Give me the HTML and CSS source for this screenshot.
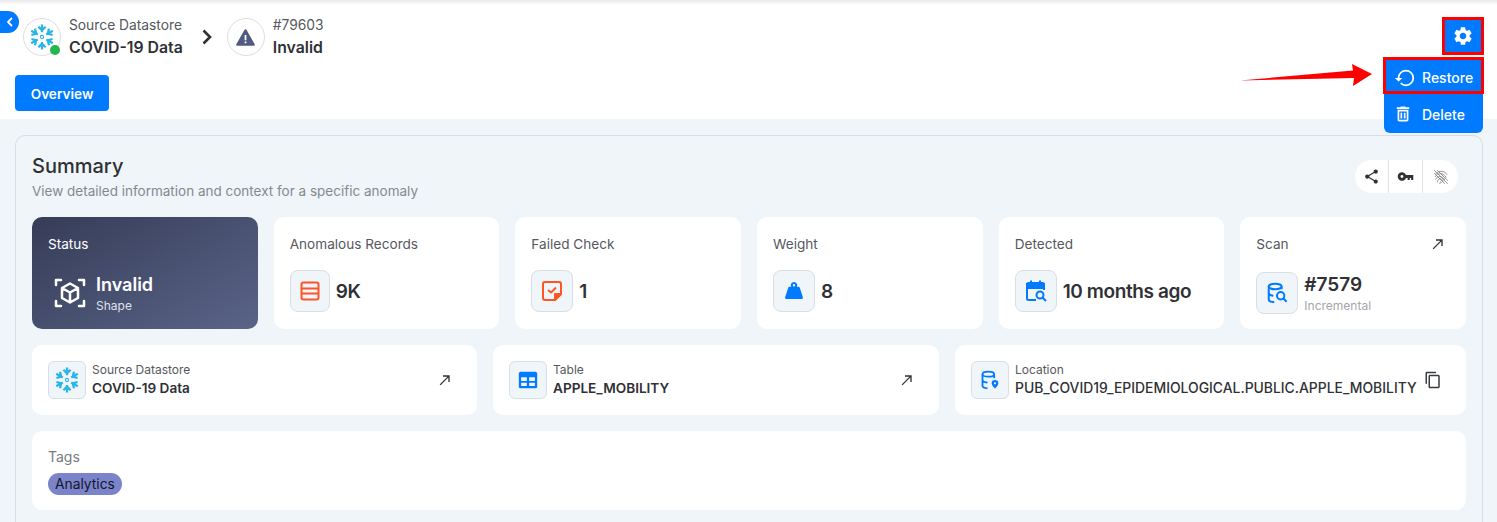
FILE: index.html
```html
<!DOCTYPE html>
<html lang="en">
<head>
  <meta charset="UTF-8" />
  <title>Anomaly #79603</title>
  <link rel="stylesheet" href="styles.css">
</head>
<body>

  <svg class="sprite" aria-hidden="true">
    <symbol id="snowflake" viewBox="0 0 24 24">
      <g fill="none" stroke="currentColor" stroke-width="2.100">
        <path id="flake-arm" d="M12 .5v7M8.700 2.600l3.300 3.300 3.300-3.300" />
        <use href="#flake-arm" transform="rotate(60 12 12)" />
        <use href="#flake-arm" transform="rotate(120 12 12)" />
        <use href="#flake-arm" transform="rotate(180 12 12)" />
        <use href="#flake-arm" transform="rotate(240 12 12)" />
        <use href="#flake-arm" transform="rotate(300 12 12)" />
      </g>
      <circle cx="12" cy="12" r="1.500" fill="none" stroke="currentColor" stroke-width="1" />
    </symbol>
    <symbol id="ne-arrow" viewBox="0 0 24 24">
      <path fill="currentColor" d="M9 5v2h6.590L4 18.590 5.410 20 17 8.410V15h2V5z" />
    </symbol>
  </svg>

  <header class="topbar">
    <button class="back-btn" type="button">
      <svg viewBox="0 0 12 12" width="12" height="12"><path d="M7.500 2.500 4 6l3.500 3.500" fill="none" stroke="#fff" stroke-width="1.800" stroke-linecap="round" stroke-linejoin="round" /></svg>
    </button>

    <div class="crumbs">
      <div class="crumb-icon">
        <svg class="flake-lg"><use href="#snowflake" /></svg>
        <span class="online-dot"></span>
      </div>
      <div class="crumb-text">
        <span class="crumb-label">Source Datastore</span>
        <strong class="crumb-value">COVID-19 Data</strong>
      </div>
      <svg class="crumb-chevron" viewBox="0 0 12 18" width="12" height="18"><path d="M2.500 2.500 9 9l-6.500 6.500" fill="none" stroke="#2f3136" stroke-width="2.600" /></svg>
      <div class="crumb-icon">
        <svg viewBox="0 0 24 24" width="21" height="21"><path fill="#515a80" d="M12 2.500c.5 0 .9.300 1.100.700l9.400 16.500c.4.700-.1 1.800-1.100 1.800H2.600c-1 0-1.500-1.100-1.100-1.800l9.400-16.500c.2-.4.600-.7 1.100-.7zm-1 6.500v6h2V9h-2zm0 7.500v2h2v-2h-2z" /></svg>
      </div>
      <div class="crumb-text">
        <span class="crumb-label">#79603</span>
        <strong class="crumb-value">Invalid</strong>
      </div>
    </div>

    <button class="tab-btn" type="button">Overview</button>

    <button class="gear-btn" type="button">
      <svg viewBox="0 0 24 24" width="22" height="22"><path fill="#fff" d="M19.140 12.940c.04-.3.06-.61.06-.94 0-.32-.02-.64-.07-.94l2.030-1.580a.49.49 0 0 0 .12-.61l-1.920-3.320a.488.488 0 0 0-.59-.22l-2.390.96c-.5-.38-1.030-.7-1.620-.94l-.36-2.540a.484.484 0 0 0-.48-.41h-3.840c-.24 0-.43.17-.47.41l-.36 2.540c-.59.24-1.130.57-1.620.94l-2.390-.96c-.22-.08-.47 0-.59.22L2.740 8.870c-.12.21-.08.47.12.61l2.030 1.580c-.05.3-.09.63-.09.94s.02.64.07.94l-2.030 1.580a.49.49 0 0 0-.12.61l1.920 3.320c.12.22.37.29.59.22l2.390-.96c.5.38 1.030.7 1.620.94l.36 2.540c.05.24.24.41.48.41h3.840c.24 0 .44-.17.47-.41l.36-2.540c.59-.24 1.130-.56 1.620-.94l2.390.96c.22.08.47 0 .59-.22l1.920-3.320c.12-.22.07-.47-.12-.61l-2.010-1.580zM12 15.600c-1.980 0-3.600-1.620-3.600-3.600s1.620-3.600 3.600-3.600 3.600 1.620 3.600 3.600-1.620 3.600-3.600 3.600z" /></svg>
    </button>

    <div class="menu">
      <div class="menu-item menu-item-marked">
        <svg viewBox="0 0 24 24" width="22" height="22"><path fill="#fff" d="M13 3a9 9 0 0 0-9 9H1l3.890 3.890.07.14L9 12H6c0-3.870 3.130-7 7-7s7 3.130 7 7-3.130 7-7 7c-1.930 0-3.680-.79-4.940-2.060l-1.420 1.420A8.954 8.954 0 0 0 13 21a9 9 0 0 0 0-18z" /></svg>
        Restore
      </div>
      <div class="menu-item">
        <svg viewBox="0 0 24 24" width="20" height="20"><path fill="#fff" d="M9.500 3l-1 1H4.500v2h15V4h-4l-1-1h-5zM5.500 7v12c0 1.100.9 2 2 2h9c1.100 0 2-.9 2-2V7h-13zm2 2h9v10h-9V9zm1.500 1.500v7h2v-7H9zm4 0v7h2v-7h-2z" /></svg>
        Delete
      </div>
    </div>

    <svg class="red-arrow" viewBox="0 0 134 24" width="134" height="24"><polygon fill="#fe0000" points="0,16.500 113,6.500 112,0 132,10 113,22 114,14" /></svg>
  </header>

  <main class="content">
    <section class="panel">
      <div class="panel-head">
        <div>
          <h2>Summary</h2>
          <p>View detailed information and context for a specific anomaly</p>
        </div>
        <div class="action-pill">
          <span class="action">
            <svg viewBox="0 0 24 24" width="17" height="17"><path fill="#2f3136" d="M18 16.080c-.76 0-1.440.3-1.960.77L8.910 12.700c.05-.23.09-.46.09-.7s-.04-.47-.09-.7l7.050-4.110c.54.5 1.250.81 2.040.81 1.660 0 3-1.340 3-3s-1.340-3-3-3-3 1.340-3 3c0 .24.04.47.09.7L8.040 9.810C7.500 9.310 6.790 9 6 9c-1.660 0-3 1.340-3 3s1.340 3 3 3c.79 0 1.500-.31 2.040-.81l7.120 4.160c-.05.21-.08.43-.08.65 0 1.610 1.310 2.920 2.920 2.920 1.610 0 2.920-1.310 2.920-2.920s-1.310-2.920-2.920-2.920z" /></svg>
          </span>
          <span class="action">
            <svg viewBox="0 0 24 24" width="17" height="17"><path fill="#2f3136" d="M12.650 10C11.830 7.670 9.610 6 7 6c-3.310 0-6 2.690-6 6s2.690 6 6 6c2.610 0 4.830-1.670 5.650-4H15v3h3v-3h2v3h3v-7H12.650zM7 14c-1.100 0-2-.9-2-2s.9-2 2-2 2 .9 2 2-.9 2-2 2z" /></svg>
          </span>
          <span class="action">
            <svg viewBox="0 0 24 24" width="18" height="18" fill="none" stroke="#808080" stroke-width="1.100"><path d="M5 8c2-4 11-6 15 1M4 12c3-6 12-6 15 1M4.500 15.500C7 10 14 10 17 16M7 19c1-6 6-6 8-1M10.500 21.500c0-3 1-4 2.500-2M3 3l18 18M3 7l14 14M7 3l14 14" /></svg>
          </span>
        </div>
      </div>

      <div class="stats">
        <div class="stat stat-status">
          <span class="stat-label">Status</span>
          <div class="status-body">
            <svg viewBox="0 0 32 32" width="32" height="32" fill="none" stroke="#fff" stroke-width="2.500" stroke-linejoin="round" stroke-linecap="round"><path d="M2 8V3h5M25 3h5v5M30 24v5h-5M7 29H2v-5" /><path d="M16 6.500l8 4.500v10l-8 4.500L8 21V11l8-4.500zM8 11l8 4.500 8-4.500M16 15.500v10" /></svg>
            <div class="status-text">
              <strong>Invalid</strong>
              <span>Shape</span>
            </div>
          </div>
        </div>

        <div class="stat">
          <span class="stat-label">Anomalous Records</span>
          <div class="stat-body">
            <span class="icon-box icon-box-narrow">
              <svg viewBox="0 0 24 24" width="24" height="24" fill="none" stroke="#fc5527" stroke-width="2"><rect x="3.500" y="3.500" width="17" height="17" rx="2" /><path d="M3.500 9.500h17M3.500 14.500h17" /></svg>
            </span>
            <span class="stat-value">9K</span>
          </div>
        </div>

        <div class="stat">
          <span class="stat-label">Failed Check</span>
          <div class="stat-body">
            <span class="icon-box">
              <svg viewBox="0 0 24 24" width="24" height="24" fill="none" stroke="#fc5527" stroke-width="2" stroke-linejoin="round"><path d="M15 21H5a2 2 0 0 1-2-2V5a2 2 0 0 1 2-2h14a2 2 0 0 1 2 2v10l-6 6z" /><path d="M8 11l3 2.500 5-5" /><path d="M15 21v-6h6z" fill="#fc5527" /></svg>
            </span>
            <span class="stat-value">1</span>
          </div>
        </div>

        <div class="stat">
          <span class="stat-label">Weight</span>
          <div class="stat-body">
            <span class="icon-box">
              <svg viewBox="0 0 24 24" width="24" height="24"><path fill="#007bff" fill-rule="evenodd" d="M12 3a3.200 3.200 0 0 1 2.800 4.800h1.700c.6 0 1 .3 1.200.8l3.200 9.700c.3 1-.3 1.700-1.200 1.700H4.300c-.9 0-1.500-.7-1.200-1.700l3.200-9.700c.2-.5.6-.8 1.200-.8h1.700A3.200 3.200 0 0 1 12 3zm0 2a1.200 1.200 0 1 0 0 2.400A1.200 1.200 0 0 0 12 5z" /></svg>
            </span>
            <span class="stat-value">8</span>
          </div>
        </div>

        <div class="stat">
          <span class="stat-label">Detected</span>
          <div class="stat-body">
            <span class="icon-box">
              <svg viewBox="0 0 24 24" width="24" height="24" fill="none" stroke="#007bff" stroke-width="2"><path d="M12 21H4.500a1.500 1.500 0 0 1-1.500-1.500V5.500A1.500 1.500 0 0 1 4.500 4h14A1.500 1.500 0 0 1 20 5.500V11" /><path d="M3 5h17v4H3z" fill="#007bff" /><path d="M7 1.500V5M16 1.500V5" /><circle cx="16" cy="16" r="3.500" /><path d="M18.500 18.500 22 22" /></svg>
            </span>
            <span class="stat-value">10 months ago</span>
          </div>
        </div>

        <div class="stat">
          <div class="stat-top">
            <span class="stat-label">Scan</span>
            <svg class="link-arrow"><use href="#ne-arrow" /></svg>
          </div>
          <div class="stat-body stat-body-scan">
            <span class="icon-box">
              <svg viewBox="0 0 24 24" width="22" height="22" fill="none" stroke="#007bff" stroke-width="2.200"><ellipse cx="10" cy="5" rx="7" ry="3" /><path d="M3 5v14c0 1.500 2.500 2.800 6 3M3 12c0 1.500 2 2.600 5 3M17 5v3" /><circle cx="16" cy="15" r="4" /><path d="M19 18l3.500 3.500" /></svg>
            </span>
            <div class="stat-stack">
              <span class="stat-value">#7579</span>
              <span class="stat-sub">Incremental</span>
            </div>
          </div>
        </div>
      </div>

      <div class="details">
        <div class="detail">
          <span class="icon-box icon-box-sm"><svg class="flake-md"><use href="#snowflake" /></svg></span>
          <div class="detail-text">
            <span>Source Datastore</span>
            <strong>COVID-19 Data</strong>
          </div>
          <svg class="link-arrow detail-end"><use href="#ne-arrow" /></svg>
        </div>

        <div class="detail">
          <span class="icon-box icon-box-sm">
            <svg viewBox="0 0 24 24" width="22" height="22"><path fill="#007bff" fill-rule="evenodd" d="M4 3h16a2 2 0 0 1 2 2v14a2 2 0 0 1-2 2H4a2 2 0 0 1-2-2V5a2 2 0 0 1 2-2zm.5 6v4h6.200V9H4.500zm8.800 0v4h6.200V9h-6.200zm-8.800 6v3.500h6.200V15H4.500zm8.800 0v3.500h6.200V15h-6.200z" /></svg>
          </span>
          <div class="detail-text">
            <span>Table</span>
            <strong>APPLE_MOBILITY</strong>
          </div>
          <svg class="link-arrow detail-end"><use href="#ne-arrow" /></svg>
        </div>

        <div class="detail detail-location">
          <span class="icon-box icon-box-sm">
            <svg viewBox="0 0 24 24" width="20" height="20" fill="none" stroke="#007bff" stroke-width="2.200"><ellipse cx="10" cy="5" rx="7" ry="3" /><path d="M3 5v14c0 1.500 2.500 2.800 6 3M3 12c0 1.500 2.500 2.800 6 3M17 5v5" /><path d="M18 12a4 4 0 0 1 4 4c0 2.500-4 6.500-4 6.500S14 18.500 14 16a4 4 0 0 1 4-4z" fill="#007bff" stroke="none" /><circle cx="18" cy="16" r="1.300" fill="#f0f5fa" stroke="none" /></svg>
          </span>
          <div class="detail-text">
            <span>Location</span>
            <strong>PUB_COVID19_EPIDEMIOLOGICAL.PUBLIC.APPLE_MOBILITY</strong>
          </div>
          <svg class="copy-icon" viewBox="0 0 24 24" width="18" height="18"><path fill="#3a3c40" d="M16 1H4c-1.100 0-2 .9-2 2v14h2V3h12V1zm3 4H8c-1.100 0-2 .9-2 2v14c0 1.100.9 2 2 2h11c1.100 0 2-.9 2-2V7c0-1.100-.9-2-2-2zm0 16H8V7h11v14z" /></svg>
        </div>
      </div>

      <div class="tags">
        <span class="tags-label">Tags</span>
        <span class="tag">Analytics</span>
      </div>
    </section>
  </main>

</body>
</html>
```

FILE: styles.css
```css
* {
  box-sizing: border-box;
}
html {
  height: 522px;
  overflow: hidden;
}
body {
  margin: 0;
  height: 522px;
  overflow: hidden;
  font-family: Inter, "Noto Sans", sans-serif;
  color: #2f3136;
  background: #f0f5fa;
}
.sprite {
  position: absolute;
  width: 0;
  height: 0;
}
button {
  border: 0;
  font-family: inherit;
  cursor: pointer;
}

/* header */
.topbar {
  position: relative;
  height: 119px;
  padding: 18px 15px 0;
  background: linear-gradient(#e9e9e9, #fff 5px);
}
.back-btn {
  position: absolute;
  left: 0;
  top: 11px;
  width: 19px;
  height: 22px;
  padding: 0;
  display: flex;
  align-items: center;
  justify-content: center;
  background: #007bff;
  border-radius: 0 11px 11px 0;
}
.crumbs {
  display: flex;
  align-items: center;
  height: 38px;
  margin-left: 8px;
}
.crumb-icon {
  position: relative;
  width: 38px;
  height: 38px;
  display: flex;
  align-items: center;
  justify-content: center;
  border: 1px solid #dedede;
  border-radius: 50%;
  background: #fff;
}
.flake-lg {
  width: 26px;
  height: 26px;
  color: #29b5e8;
}
.online-dot {
  position: absolute;
  right: 0;
  bottom: 0;
  width: 10px;
  height: 10px;
  border-radius: 50%;
  background: #22b84c;
}
.crumb-text {
  display: flex;
  flex-direction: column;
  margin-left: 8px;
}
.crumb-label {
  font-size: 13.800px;
  line-height: 16px;
  color: #55585e;
}
.crumb-value {
  margin-top: 5px;
  font-size: 15.800px;
  line-height: 20px;
  font-weight: 600;
}
.crumb-chevron {
  margin: 0 14px 0 18px;
}
.tab-btn {
  display: block;
  width: 94px;
  height: 36px;
  margin-top: 19px;
  padding: 1px 0 0;
  font-size: 13.600px;
  font-weight: 600;
  color: #fff;
  background: #007bff;
  border-radius: 4px;
}
.gear-btn {
  position: absolute;
  left: 1442px;
  top: 17px;
  width: 42px;
  height: 38px;
  padding: 0;
  display: flex;
  align-items: center;
  justify-content: center;
  background: #007bff;
  border: 3px solid #fe0000;
}
.menu {
  position: absolute;
  left: 1384px;
  top: 58px;
  width: 99px;
  height: 75px;
  background: #007bff;
  border-radius: 0 0 6px 6px;
  z-index: 2;
}
.menu-item {
  display: flex;
  align-items: center;
  gap: 9px;
  height: 37px;
  padding: 1px 0 0 9px;
  font-size: 14px;
  font-weight: 500;
  color: #fff;
}
.menu-item-marked {
  margin: -1px;
  width: 101px;
  gap: 6px;
  padding: 4px 0 0 8px;
  border: 3px solid #fe0000;
}
.menu-item-marked + .menu-item {
  margin-top: 2px;
}
.red-arrow {
  position: absolute;
  left: 1240px;
  top: 64px;
}

/* summary panel */
.content {
  padding: 16px 14px 0 15px;
}
.panel {
  height: 387px;
  padding: 16px 16px 0;
  border: 1px solid #d8dee5;
  border-bottom: 0;
  border-radius: 10px 10px 0 0;
}
.panel-head {
  display: flex;
  justify-content: space-between;
  height: 65px;
}
.panel-head h2 {
  margin: 1px 0 0;
  font-size: 20px;
  line-height: 26px;
  font-weight: 500;
}
.panel-head p {
  margin: 2px 0 0;
  font-size: 13.500px;
  line-height: 20px;
  color: #85898f;
}
.action-pill {
  display: flex;
  height: 33px;
  margin: 8px 8px 0 0;
  background: #fff;
  border-radius: 17px;
}
.action {
  width: 34px;
  display: flex;
  align-items: center;
  justify-content: center;
  border-left: 1px solid #dfe2e6;
}
.action:first-child {
  width: 33px;
  border-left: 0;
}
.action:last-child {
  width: 36px;
}

/* stat cards */
.stats {
  display: grid;
  grid-template-columns: repeat(6, 1fr);
  gap: 16px;
}
.stat {
  height: 112px;
  padding: 16px;
  background: #fff;
  border-radius: 10px;
}
.stat-label {
  display: block;
  font-size: 13.600px;
  line-height: 22px;
  color: #55585e;
}
.stat-top {
  display: flex;
  justify-content: space-between;
  align-items: center;
  padding-right: 4px;
}
.stat-body {
  display: flex;
  align-items: center;
  gap: 6px;
  margin-top: 15px;
}
.stat-body-scan {
  margin-top: 16px;
}
.icon-box {
  flex: none;
  width: 42px;
  height: 42px;
  display: flex;
  align-items: center;
  justify-content: center;
  background: #f0f5fa;
  border: 1px solid #d8dee5;
  border-radius: 8px;
}
.icon-box-narrow {
  width: 40px;
}
.icon-box-sm {
  width: 38px;
  height: 38px;
  border-radius: 6px;
}
.stat-value {
  padding-top: 1px;
  font-size: 19px;
  line-height: 26px;
  font-weight: 600;
  letter-spacing: -0.4px;
}
.stat-stack {
  display: flex;
  flex-direction: column;
}
.stat-stack .stat-value {
  letter-spacing: 0;
}
.stat-sub {
  font-size: 12px;
  line-height: 16px;
  color: #a3a6ab;
}
.link-arrow {
  width: 16px;
  height: 16px;
  color: #2f3136;
}
.stat-status {
  background: linear-gradient(150deg, #363c57, #5a6488);
}
.stat-status .stat-label {
  color: #fff;
}
.status-body {
  display: flex;
  align-items: center;
  gap: 10px;
  margin: 17px 0 0 6px;
}
.status-text {
  display: flex;
  flex-direction: column;
  color: #fff;
}
.status-text strong {
  font-size: 18px;
  line-height: 26px;
  font-weight: 600;
}
.status-text span {
  font-size: 12px;
  line-height: 16px;
  color: #dfe2ea;
}

/* detail cards */
.details {
  display: grid;
  grid-template-columns: 445px 446px 1fr;
  gap: 16px;
  margin-top: 16px;
}
.detail {
  display: flex;
  align-items: center;
  height: 70px;
  padding: 0 24px 0 16px;
  background: #fff;
  border-radius: 10px;
}
.detail-text {
  display: flex;
  flex-direction: column;
  margin: 0 0 2px 6px;
}
.detail-text span {
  font-size: 12px;
  line-height: 16px;
  color: #55585e;
}
.detail-text strong {
  margin-top: 1px;
  font-size: 13.600px;
  line-height: 18px;
  font-weight: 600;
}
.detail-location strong {
  font-size: 13.900px;
  font-weight: 500;
  white-space: nowrap;
}
.detail-end {
  margin-left: auto;
}
.copy-icon {
  margin-left: auto;
}
.flake-md {
  width: 26px;
  height: 26px;
  color: #29b5e8;
}

/* tags */
.tags {
  height: 79px;
  margin-top: 16px;
  padding: 16px;
  background: #fff;
  border-radius: 10px;
}
.tags-label {
  display: block;
  font-size: 14px;
  line-height: 20px;
  color: #777a80;
}
.tag {
  display: inline-block;
  margin-top: 6px;
  padding: 0 7px;
  font-size: 13.800px;
  line-height: 22px;
  color: #14162a;
  background: #7b84cb;
  border-radius: 11px;
}
```
